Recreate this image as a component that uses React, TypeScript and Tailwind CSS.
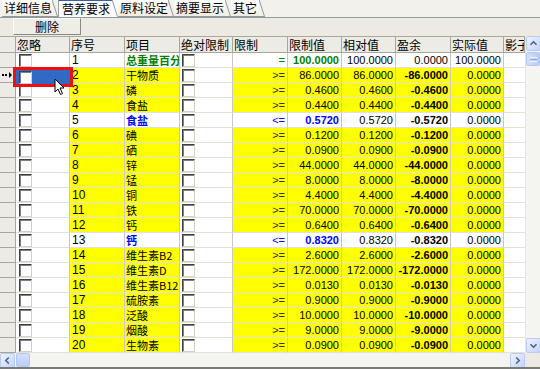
import React from "react";

type Row = {
  no: number;
  name: string;
  op: string;
  lim: string;
  rel: string;
  sur: string;
  act: string;
  kind: "y" | "g" | "b";
};

const rows: Row[] = [
  { no: 1, name: "总重量百分比", op: "=", lim: "100.0000", rel: "100.0000", sur: "0.0000", act: "100.0000", kind: "g" },
  { no: 2, name: "干物质", op: ">=", lim: "86.0000", rel: "86.0000", sur: "-86.0000", act: "0.0000", kind: "y" },
  { no: 3, name: "磷", op: ">=", lim: "0.4600", rel: "0.4600", sur: "-0.4600", act: "0.0000", kind: "y" },
  { no: 4, name: "食盐", op: ">=", lim: "0.4400", rel: "0.4400", sur: "-0.4400", act: "0.0000", kind: "y" },
  { no: 5, name: "食盐", op: "<=", lim: "0.5720", rel: "0.5720", sur: "-0.5720", act: "0.0000", kind: "b" },
  { no: 6, name: "碘", op: ">=", lim: "0.1200", rel: "0.1200", sur: "-0.1200", act: "0.0000", kind: "y" },
  { no: 7, name: "硒", op: ">=", lim: "0.0900", rel: "0.0900", sur: "-0.0900", act: "0.0000", kind: "y" },
  { no: 8, name: "锌", op: ">=", lim: "44.0000", rel: "44.0000", sur: "-44.0000", act: "0.0000", kind: "y" },
  { no: 9, name: "锰", op: ">=", lim: "8.0000", rel: "8.0000", sur: "-8.0000", act: "0.0000", kind: "y" },
  { no: 10, name: "铜", op: ">=", lim: "4.4000", rel: "4.4000", sur: "-4.4000", act: "0.0000", kind: "y" },
  { no: 11, name: "铁", op: ">=", lim: "70.0000", rel: "70.0000", sur: "-70.0000", act: "0.0000", kind: "y" },
  { no: 12, name: "钙", op: ">=", lim: "0.6400", rel: "0.6400", sur: "-0.6400", act: "0.0000", kind: "y" },
  { no: 13, name: "钙", op: "<=", lim: "0.8320", rel: "0.8320", sur: "-0.8320", act: "0.0000", kind: "b" },
  { no: 14, name: "维生素B2", op: ">=", lim: "2.6000", rel: "2.6000", sur: "-2.6000", act: "0.0000", kind: "y" },
  { no: 15, name: "维生素D", op: ">=", lim: "172.0000", rel: "172.0000", sur: "-172.0000", act: "0.0000", kind: "y" },
  { no: 16, name: "维生素B12", op: ">=", lim: "0.0130", rel: "0.0130", sur: "-0.0130", act: "0.0000", kind: "y" },
  { no: 17, name: "硫胺素", op: ">=", lim: "0.9000", rel: "0.9000", sur: "-0.9000", act: "0.0000", kind: "y" },
  { no: 18, name: "泛酸", op: ">=", lim: "10.0000", rel: "10.0000", sur: "-10.0000", act: "0.0000", kind: "y" },
  { no: 19, name: "烟酸", op: ">=", lim: "9.0000", rel: "9.0000", sur: "-9.0000", act: "0.0000", kind: "y" },
  { no: 20, name: "生物素", op: ">=", lim: "0.0900", rel: "0.0900", sur: "-0.0900", act: "0.0000", kind: "y" },
];

const cjk = "font-['Noto_Sans_CJK_SC',sans-serif]";
const num = "font-['Liberation_Sans','Noto_Sans_CJK_SC',sans-serif]";

function Check() {
  return (
    <div className="w-[13px] h-[13px] bg-white border border-t-[#404040] border-l-[#404040] border-r-[#d4d0c8] border-b-[#d4d0c8] shadow-[inset_1px_1px_0_#808080]" />
  );
}

const cols = "grid grid-cols-[16px_54px_55px_55px_53px_55px_54px_54px_55px_53px_21px]";

function Tab({ label, active, w }: { label: string; active?: boolean; w: string }) {
  return (
    <div className="flex items-stretch">
      <div
        className={
          "h-[18px] flex items-center text-[12px] text-black whitespace-nowrap " +
          w +
          " " +
          cjk +
          (active
            ? " bg-[#fcfcfe] border-t-2 border-t-[#3d5f9c] border-l border-l-[#a0a0a0] pl-[3px]"
            : " bg-gradient-to-b from-white to-[#eeede5] border-b border-[#919b9c] pl-[2px]")
        }
      >
        {label}
      </div>
      <svg width="6" height="18" className="block">
        <rect x="0" y="0" width="6" height="18" fill={active ? "#fcfcfe" : "#f2f1ec"} />
        <line x1="0" y1="0.5" x2="5.5" y2="17.5" stroke="#919b9c" strokeWidth="1" />
        {!active && <line x1="0" y1="17.5" x2="6" y2="17.5" stroke="#919b9c" />}
      </svg>
    </div>
  );
}

function Arrow({ dir }: { dir: "up" | "down" | "left" | "right" }) {
  const paths: Record<string, string> = {
    up: "M4 9 L7.5 5.5 L11 9",
    down: "M4 6 L7.5 9.5 L11 6",
    left: "M9 4 L5.5 7.5 L9 11",
    right: "M6 4 L9.5 7.5 L6 11",
  };
  return (
    <div className="w-[15px] h-[15px] rounded-[2px] bg-gradient-to-br from-[#eef3ff] to-[#c3d3fd] border border-[#b8cbf5] flex items-center justify-center">
      <svg width="15" height="15" viewBox="0 0 15 15">
        <path d={paths[dir]} fill="none" stroke="#4d6185" strokeWidth="1.8" />
      </svg>
    </div>
  );
}

export default function App() {
  return (
    <div className="w-[540px] h-[369px] bg-[#eceae2] overflow-hidden flex flex-col select-none">
      {/* Tabs */}
      <div className="h-[18px] flex items-end bg-[#f2f1ec] border-b border-[#919b9c] pl-[2px]">
        <Tab label="详细信息" w="w-[50px]" />
        <Tab label="营养要求" active w="w-[54px]" />
        <Tab label="原料设定" w="w-[50px]" />
        <Tab label="摘要显示" w="w-[51px]" />
        <Tab label="其它" w="w-[28px]" />
      </div>
      {/* Toolbar */}
      <div className="h-[18px] flex items-start pl-[13px] bg-[#eceae2]">
        <div
          className={
            "w-[68px] h-[17px] flex items-center justify-center text-[12px] text-black bg-[#eeede6] border border-t-white border-l-white border-r-[#8a8a84] border-b-[#8a8a84] " +
            cjk
          }
        >
          删除
        </div>
      </div>
      {/* Grid area */}
      <div className="flex h-[317px]">
        <div className="w-[525px] flex flex-col overflow-hidden">
          {/* header */}
          <div className={cols + " h-[17px] bg-[#ecebe5] border-t border-[#aca899]"}>
            {["", "忽略", "序号", "项目", "绝对限制", "限制", "限制值", "相对值", "盈余", "实际值", "影子"].map((h, i) => (
              <div
                key={i}
                className={
                  "border-r border-b border-[#a7a69d] pl-[1px] text-[12px] leading-[15px] text-black whitespace-nowrap overflow-hidden " +
                  cjk
                }
              >
                {h}
              </div>
            ))}
          </div>
          {rows.map((r) => {
            const yl = r.kind === "y" ? "bg-[#ffff00]" : "bg-white";
            const colorText =
              r.kind === "g" ? "text-[#008000] font-bold" : r.kind === "b" ? "text-[#0000ff] font-bold" : "text-black";
            const opColor = r.kind === "g" ? "text-[#008000]" : r.kind === "b" ? "text-[#0000ff]" : "text-[#303030]";
            const cell = "h-[15px] border-r border-b border-r-[#c8c8c0] border-b-[#e2e2da] overflow-hidden whitespace-nowrap";
            const selected = r.no === 2;
            return (
              <div key={r.no} className={cols + " h-[15px]"}>
                <div className="h-[15px] bg-[#ecebe5] border-r border-b border-[#a7a69d] flex items-center">
                  {selected && (
                    <svg width="14" height="8" viewBox="0 0 14 8" className="ml-[1px]">
                      <rect x="1" y="3" width="2" height="2" fill="#000" />
                      <rect x="4" y="3" width="2" height="2" fill="#000" />
                      <path d="M8 1 L11 4 L8 7 Z" fill="#000" />
                    </svg>
                  )}
                </div>
                <div className={cell + " relative bg-white pl-[3px] pt-[1px] overflow-visible"}>
                  {selected ? (
                    <>
                      <div className="absolute left-[-3px] right-[-4px] top-[-1px] bottom-[-5px] border-[3px] border-[#ee1010] bg-[#316ac5] z-10 pl-[3px] pt-[1px]">
                        <Check />
                      </div>
                      <svg
                        width="12"
                        height="18"
                        viewBox="0 0 12 18"
                        className="absolute left-[38px] top-[10px] z-20"
                      >
                        <path d="M1 1 L1 14 L4 11 L6.5 16.5 L8.5 15.5 L6 10 L10 10 Z" fill="#fff" stroke="#000" strokeWidth="1" />
                      </svg>
                    </>
                  ) : (
                    <Check />
                  )}
                </div>
                <div className={cell + " " + yl + " pl-[2px] text-[12px] leading-[14px] text-black " + num}>{r.no}</div>
                <div className={cell + " " + yl + " pl-[1px] text-[11px] leading-[14px] " + colorText + " " + cjk}>{r.name}</div>
                <div className={cell + " bg-white pl-[2px] pt-[1px]"}>
                  <Check />
                </div>
                <div className={cell + " " + yl + " pr-[2px] text-right text-[11px] leading-[14px] " + opColor + " " + num}>{r.op}</div>
                <div
                  className={
                    cell +
                    " " +
                    yl +
                    " pr-[2px] text-right text-[11px] leading-[14px] " +
                    (r.kind === "y" ? "text-black" : colorText) +
                    " " +
                    num
                  }
                >
                  {r.lim}
                </div>
                <div className={cell + " " + yl + " pr-[2px] text-right text-[11px] leading-[14px] text-black " + num}>{r.rel}</div>
                <div className={cell + " " + yl + " pr-[2px] text-right text-[11px] leading-[14px] text-black " + (r.kind === "g" ? "font-normal " : "font-bold ") + num}>
                  {r.sur}
                </div>
                <div className={cell + " " + yl + " pr-[2px] text-right text-[11px] leading-[14px] text-black " + num}>{r.act}</div>
                <div className={cell + " bg-white border-r-0"}></div>
              </div>
            );
          })}
        </div>
        {/* vertical scrollbar */}
        <div className="w-[15px] flex flex-col bg-[#f4f4f0] border-l border-[#e6e6e0]">
          <Arrow dir="up" />
          <div className="h-[14px] mt-[1px] mx-0 rounded-[2px] bg-gradient-to-r from-[#d4e0fd] to-[#b9cdfa] border border-[#b3c7f3] flex items-center justify-center">
            <div className="w-[7px] flex flex-col gap-[1px]">
              <div className="h-px bg-[#eef3ff]" />
              <div className="h-px bg-[#8ca8e8]" />
              <div className="h-px bg-[#eef3ff]" />
            </div>
          </div>
          <div className="flex-1" />
          <Arrow dir="down" />
        </div>
      </div>
      {/* horizontal scrollbar */}
      <div className="h-[14px] flex bg-[#f4f4f0]">
        <div className="w-[525px] flex items-center">
          <Arrow dir="left" />
          <div className="w-[14px] h-[14px] ml-[1px] rounded-[2px] bg-gradient-to-b from-[#d4e0fd] to-[#b9cdfa] border border-[#b3c7f3]" />
          <div className="flex-1" />
          <Arrow dir="right" />
        </div>
        <div className="w-[15px] bg-[#eceae2]" />
      </div>
      <div className="h-[2px] bg-[#7a7a76]" />
    </div>
  );
}
